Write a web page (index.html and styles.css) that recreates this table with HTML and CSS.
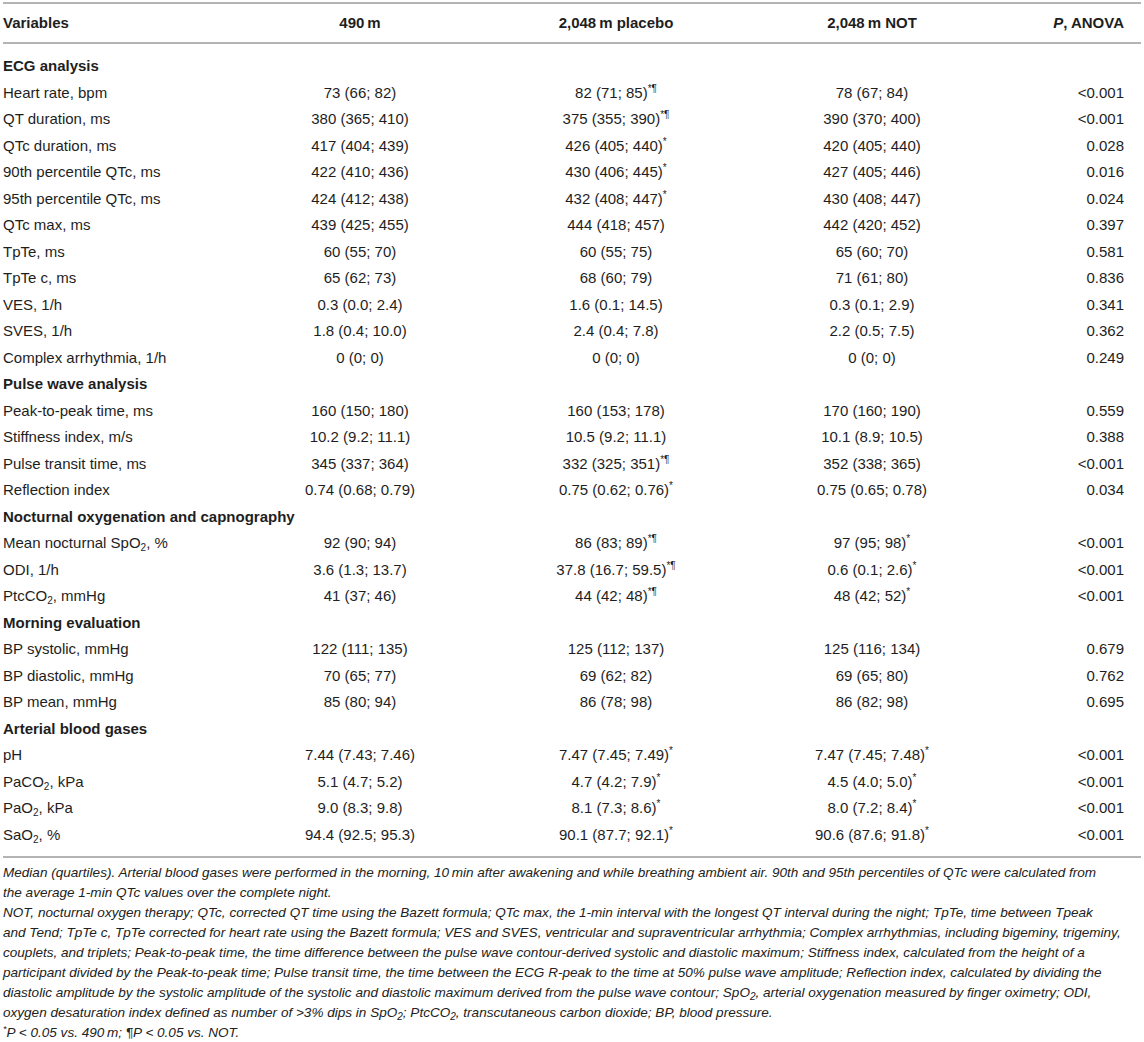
FILE: index.html
```html
<!DOCTYPE html>
<html lang="en">
<head>
<meta charset="utf-8">
<title>Table</title>
<link rel="stylesheet" href="styles.css">
</head>
<body>
<div class="wrap">
<table class="data">
  <colgroup>
    <col class="c-var">
    <col class="c-val">
    <col class="c-val">
    <col class="c-val">
    <col class="c-p">
  </colgroup>
  <thead>
    <tr>
      <th class="left">Variables</th>
      <th>490&#8201;m</th>
      <th>2,048&#8201;m placebo</th>
      <th>2,048&#8201;m NOT</th>
      <th class="right"><i>P</i>, ANOVA</th>
    </tr>
  </thead>
  <tbody>
    <tr class="sec first"><td colspan="5">ECG analysis</td></tr>
    <tr><td>Heart rate, bpm</td><td>73 (66; 82)</td><td>82 (71; 85)<sup>*¶</sup></td><td>78 (67; 84)</td><td>&lt;0.001</td></tr>
    <tr><td>QT duration, ms</td><td>380 (365; 410)</td><td>375 (355; 390)<sup>*¶</sup></td><td>390 (370; 400)</td><td>&lt;0.001</td></tr>
    <tr><td>QTc duration, ms</td><td>417 (404; 439)</td><td>426 (405; 440)<sup>*</sup></td><td>420 (405; 440)</td><td>0.028</td></tr>
    <tr><td>90th percentile QTc, ms</td><td>422 (410; 436)</td><td>430 (406; 445)<sup>*</sup></td><td>427 (405; 446)</td><td>0.016</td></tr>
    <tr><td>95th percentile QTc, ms</td><td>424 (412; 438)</td><td>432 (408; 447)<sup>*</sup></td><td>430 (408; 447)</td><td>0.024</td></tr>
    <tr><td>QTc max, ms</td><td>439 (425; 455)</td><td>444 (418; 457)</td><td>442 (420; 452)</td><td>0.397</td></tr>
    <tr><td>TpTe, ms</td><td>60 (55; 70)</td><td>60 (55; 75)</td><td>65 (60; 70)</td><td>0.581</td></tr>
    <tr><td>TpTe c, ms</td><td>65 (62; 73)</td><td>68 (60; 79)</td><td>71 (61; 80)</td><td>0.836</td></tr>
    <tr><td>VES, 1/h</td><td>0.3 (0.0; 2.4)</td><td>1.6 (0.1; 14.5)</td><td>0.3 (0.1; 2.9)</td><td>0.341</td></tr>
    <tr><td>SVES, 1/h</td><td>1.8 (0.4; 10.0)</td><td>2.4 (0.4; 7.8)</td><td>2.2 (0.5; 7.5)</td><td>0.362</td></tr>
    <tr><td>Complex arrhythmia, 1/h</td><td>0 (0; 0)</td><td>0 (0; 0)</td><td>0 (0; 0)</td><td>0.249</td></tr>
    <tr class="sec"><td colspan="5">Pulse wave analysis</td></tr>
    <tr><td>Peak-to-peak time, ms</td><td>160 (150; 180)</td><td>160 (153; 178)</td><td>170 (160; 190)</td><td>0.559</td></tr>
    <tr><td>Stiffness index, m/s</td><td>10.2 (9.2; 11.1)</td><td>10.5 (9.2; 11.1)</td><td>10.1 (8.9; 10.5)</td><td>0.388</td></tr>
    <tr><td>Pulse transit time, ms</td><td>345 (337; 364)</td><td>332 (325; 351)<sup>*¶</sup></td><td>352 (338; 365)</td><td>&lt;0.001</td></tr>
    <tr><td>Reflection index</td><td>0.74 (0.68; 0.79)</td><td>0.75 (0.62; 0.76)<sup>*</sup></td><td>0.75 (0.65; 0.78)</td><td>0.034</td></tr>
    <tr class="sec"><td colspan="5">Nocturnal oxygenation and capnography</td></tr>
    <tr><td>Mean nocturnal SpO<sub>2</sub>, %</td><td>92 (90; 94)</td><td>86 (83; 89)<sup>*¶</sup></td><td>97 (95; 98)<sup>*</sup></td><td>&lt;0.001</td></tr>
    <tr><td>ODI, 1/h</td><td>3.6 (1.3; 13.7)</td><td>37.8 (16.7; 59.5)<sup>*¶</sup></td><td>0.6 (0.1; 2.6)<sup>*</sup></td><td>&lt;0.001</td></tr>
    <tr><td>PtcCO<sub>2</sub>, mmHg</td><td>41 (37; 46)</td><td>44 (42; 48)<sup>*¶</sup></td><td>48 (42; 52)<sup>*</sup></td><td>&lt;0.001</td></tr>
    <tr class="sec"><td colspan="5">Morning evaluation</td></tr>
    <tr><td>BP systolic, mmHg</td><td>122 (111; 135)</td><td>125 (112; 137)</td><td>125 (116; 134)</td><td>0.679</td></tr>
    <tr><td>BP diastolic, mmHg</td><td>70 (65; 77)</td><td>69 (62; 82)</td><td>69 (65; 80)</td><td>0.762</td></tr>
    <tr><td>BP mean, mmHg</td><td>85 (80; 94)</td><td>86 (78; 98)</td><td>86 (82; 98)</td><td>0.695</td></tr>
    <tr class="sec"><td colspan="5">Arterial blood gases</td></tr>
    <tr><td>pH</td><td>7.44 (7.43; 7.46)</td><td>7.47 (7.45; 7.49)<sup>*</sup></td><td>7.47 (7.45; 7.48)<sup>*</sup></td><td>&lt;0.001</td></tr>
    <tr><td>PaCO<sub>2</sub>, kPa</td><td>5.1 (4.7; 5.2)</td><td>4.7 (4.2; 7.9)<sup>*</sup></td><td>4.5 (4.0; 5.0)<sup>*</sup></td><td>&lt;0.001</td></tr>
    <tr><td>PaO<sub>2</sub>, kPa</td><td>9.0 (8.3; 9.8)</td><td>8.1 (7.3; 8.6)<sup>*</sup></td><td>8.0 (7.2; 8.4)<sup>*</sup></td><td>&lt;0.001</td></tr>
    <tr class="last"><td>SaO<sub>2</sub>, %</td><td>94.4 (92.5; 95.3)</td><td>90.1 (87.7; 92.1)<sup>*</sup></td><td>90.6 (87.6; 91.8)<sup>*</sup></td><td>&lt;0.001</td></tr>
  </tbody>
</table>
<div class="notes">
  <p>Median (quartiles). Arterial blood gases were performed in the morning, 10&#8201;min after awakening and while breathing ambient air. 90th and 95th percentiles of QTc were calculated from<br>the average 1-min QTc values over the complete night.</p>
  <p>NOT, nocturnal oxygen therapy; QTc, corrected QT time using the Bazett formula; QTc max, the 1-min interval with the longest QT interval during the night; TpTe, time between Tpeak<br>and Tend; TpTe c, TpTe corrected for heart rate using the Bazett formula; VES and SVES, ventricular and supraventricular arrhythmia; Complex arrhythmias, including bigeminy, trigeminy,<br>couplets, and triplets; Peak-to-peak time, the time difference between the pulse wave contour-derived systolic and diastolic maximum; Stiffness index, calculated from the height of a<br>participant divided by the Peak-to-peak time; Pulse transit time, the time between the ECG R-peak to the time at 50% pulse wave amplitude; Reflection index, calculated by dividing the<br>diastolic amplitude by the systolic amplitude of the systolic and diastolic maximum derived from the pulse wave contour; SpO<sub>2</sub>, arterial oxygenation measured by finger oximetry; ODI,<br>oxygen desaturation index defined as number of &gt;3% dips in SpO<sub>2</sub>; PtcCO<sub>2</sub>, transcutaneous carbon dioxide; BP, blood pressure.</p>
  <p><sup>*</sup>P &lt; 0.05 vs. 490&#8201;m; ¶P &lt; 0.05 vs. NOT.</p>
</div>
</div>
</body>
</html>
```

FILE: styles.css
```css
html, body {
  margin: 0;
  padding: 0;
  background: #ffffff;
}

body {
  font-family: "Liberation Sans", Arial, Helvetica, sans-serif;
  color: #1e1e1e;
}

.wrap {
  padding: 2px 3px 0 3px;
}

.data {
  width: 100%;
  border-collapse: collapse;
  table-layout: fixed;
  font-size: 15px;
}

.c-var { width: 229px; }
.c-val { width: 256px; }
.c-p { width: 141px; }

.data th {
  font-weight: bold;
  text-align: center;
  height: 38px;
  padding: 0;
  border-top: 2px solid #b4b4b4;
  border-bottom: 2px solid #b4b4b4;
  vertical-align: middle;
  line-height: 18px;
}

.data th.left { text-align: left; }
.data th.right { text-align: right; padding-right: 17px; }

.data td {
  padding: 0;
  height: 26.5px;
  line-height: 18px;
  text-align: center;
  vertical-align: middle;
  white-space: nowrap;
}

.data td:first-child { text-align: left; }
.data td:last-child { text-align: right; padding-right: 17px; }

.data tr.sec td {
  font-weight: bold;
  text-align: left;
}

.data tr.first td { padding-top: 9px; }
.data tr.last td {
  padding-bottom: 8px;
  border-bottom: 2px solid #b4b4b4;
}

.data sup {
  font-size: 10px;
  line-height: 0;
  vertical-align: 6px;
}

.data sub {
  font-size: 10px;
  line-height: 0;
  vertical-align: -3px;
}

.notes {
  margin-top: 5px;
  font-size: 13.55px;
  font-style: italic;
  line-height: 20px;
  color: #222;
  white-space: nowrap;
}

.notes p { margin: 0; }

.notes sub {
  font-size: 10px;
  line-height: 0;
  vertical-align: -3px;
}

.notes sup {
  font-size: 9px;
  line-height: 0;
  vertical-align: 5px;
}
```
